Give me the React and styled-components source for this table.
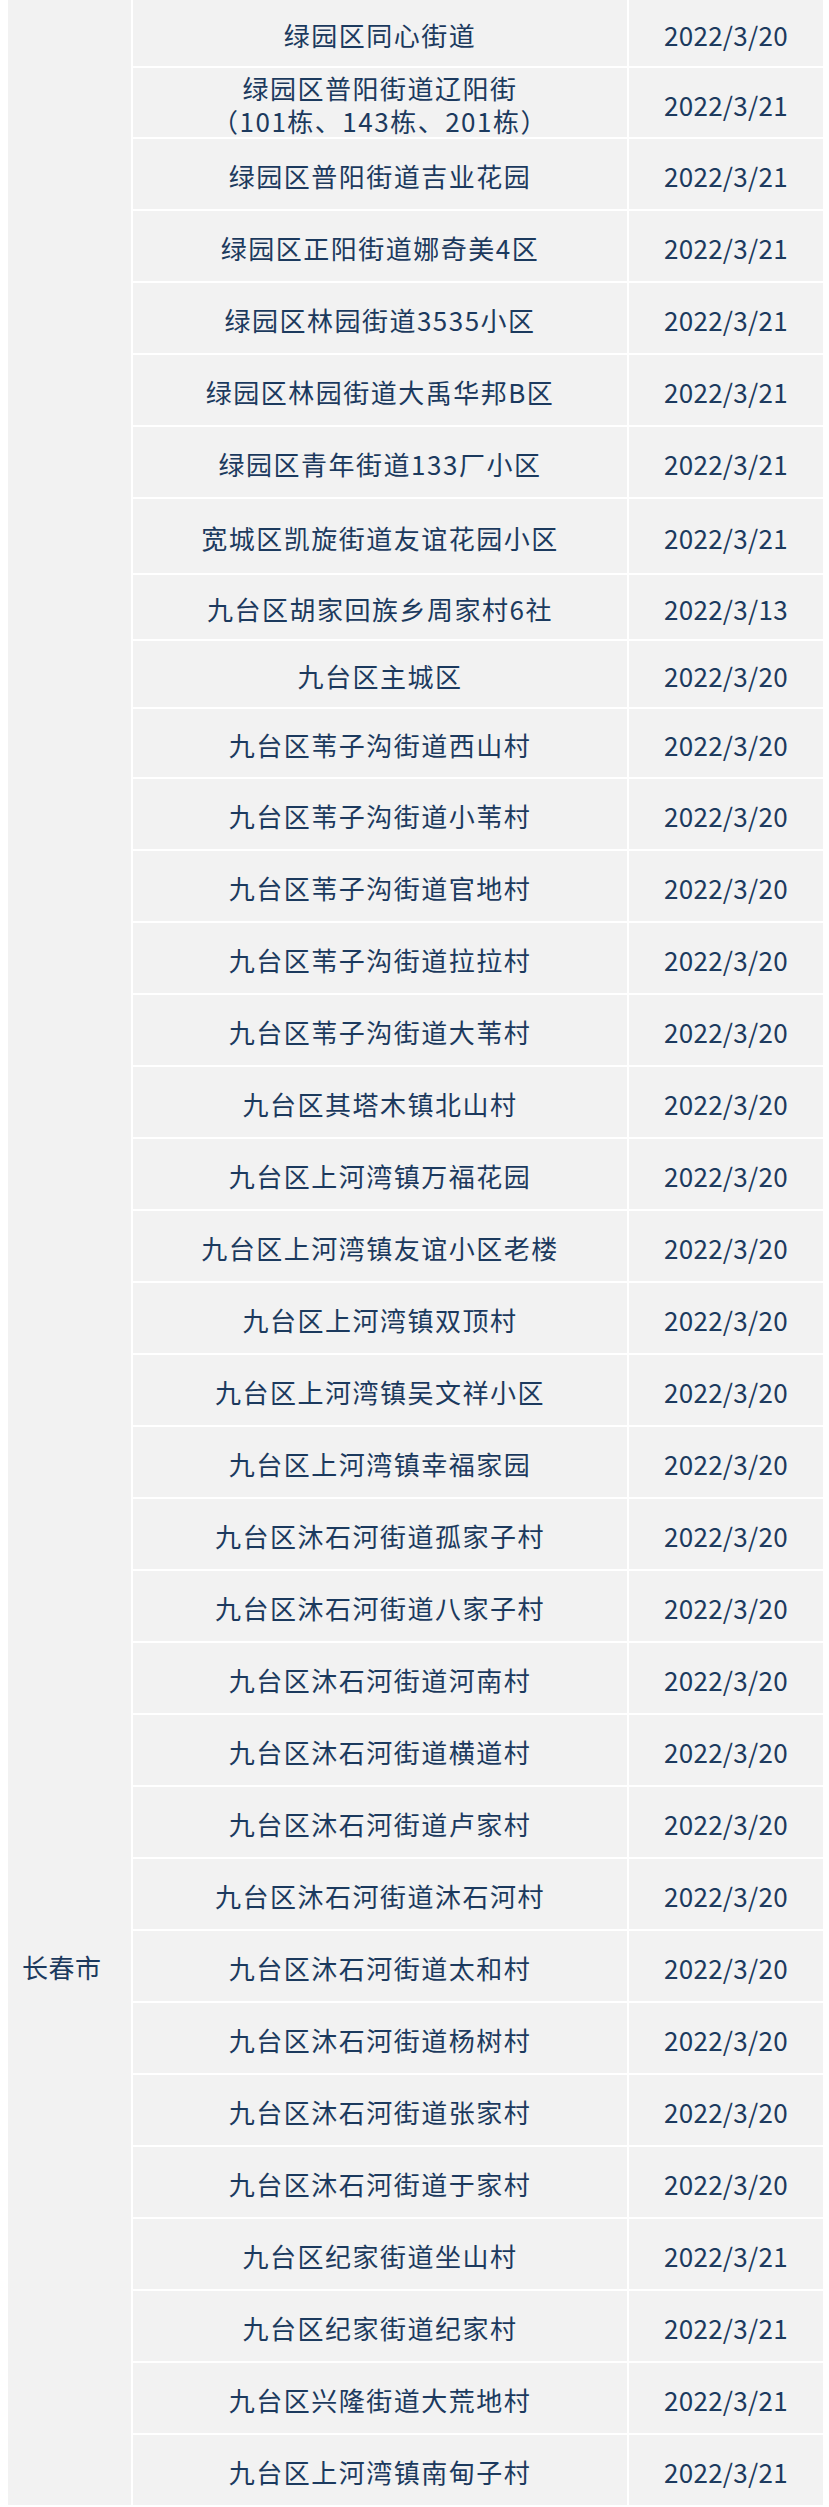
import styled, { createGlobalStyle } from "styled-components";

const GlobalStyle = createGlobalStyle`
  html, body {
    margin: 0;
    padding: 0;
    background: #ffffff;
  }
  body {
    font-family: "Noto Sans CJK SC", "Noto Sans", sans-serif;
    color: #1c3a5e;
  }
`;

const rows = [
  { place: "绿园区同心街道", date: "2022/3/20", h: 68 },
  { place: ["绿园区普阳街道辽阳街", "（101栋、143栋、201栋）"], date: "2022/3/21", h: 71 },
  { place: "绿园区普阳街道吉业花园", date: "2022/3/21" },
  { place: "绿园区正阳街道娜奇美4区", date: "2022/3/21" },
  { place: "绿园区林园街道3535小区", date: "2022/3/21" },
  { place: "绿园区林园街道大禹华邦B区", date: "2022/3/21" },
  { place: "绿园区青年街道133厂小区", date: "2022/3/21" },
  { place: "宽城区凯旋街道友谊花园小区", date: "2022/3/21", h: 76 },
  { place: "九台区胡家回族乡周家村6社", date: "2022/3/13", h: 66 },
  { place: "九台区主城区", date: "2022/3/20", h: 68 },
  { place: "九台区苇子沟街道西山村", date: "2022/3/20", h: 70 },
  { place: "九台区苇子沟街道小苇村", date: "2022/3/20" },
  { place: "九台区苇子沟街道官地村", date: "2022/3/20" },
  { place: "九台区苇子沟街道拉拉村", date: "2022/3/20" },
  { place: "九台区苇子沟街道大苇村", date: "2022/3/20" },
  { place: "九台区其塔木镇北山村", date: "2022/3/20" },
  { place: "九台区上河湾镇万福花园", date: "2022/3/20" },
  { place: "九台区上河湾镇友谊小区老楼", date: "2022/3/20" },
  { place: "九台区上河湾镇双顶村", date: "2022/3/20" },
  { place: "九台区上河湾镇吴文祥小区", date: "2022/3/20" },
  { place: "九台区上河湾镇幸福家园", date: "2022/3/20" },
  { place: "九台区沐石河街道孤家子村", date: "2022/3/20" },
  { place: "九台区沐石河街道八家子村", date: "2022/3/20" },
  { place: "九台区沐石河街道河南村", date: "2022/3/20" },
  { place: "九台区沐石河街道横道村", date: "2022/3/20" },
  { place: "九台区沐石河街道卢家村", date: "2022/3/20" },
  { place: "九台区沐石河街道沐石河村", date: "2022/3/20" },
  { place: "九台区沐石河街道太和村", date: "2022/3/20" },
  { place: "九台区沐石河街道杨树村", date: "2022/3/20" },
  { place: "九台区沐石河街道张家村", date: "2022/3/20" },
  { place: "九台区沐石河街道于家村", date: "2022/3/20" },
  { place: "九台区纪家街道坐山村", date: "2022/3/21" },
  { place: "九台区纪家街道纪家村", date: "2022/3/21" },
  { place: "九台区兴隆街道大荒地村", date: "2022/3/21" },
  { place: "九台区上河湾镇南甸子村", date: "2022/3/21" },
];

function App() {
  return (
    <>
      <GlobalStyle />
      <Page>
        <Table>
          <CityCell>长春市</CityCell>
          <Rows>
            {rows.map((r, i) => (
              <Row key={i} $h={(r.h || 72) - 2}>
                <PlaceCell>
                  {Array.isArray(r.place)
                    ? r.place.map((line) => <Line key={line}>{line}</Line>)
                    : r.place}
                </PlaceCell>
                <DateCell>{r.date}</DateCell>
              </Row>
            ))}
          </Rows>
        </Table>
      </Page>
    </>
  );
}

const Page = styled.div`
  width: 829px;
  padding: 0 6px 1px 8px;
  box-sizing: border-box;
  background: #ffffff;
`;

const Table = styled.div`
  display: flex;
  gap: 2px;
`;

const CityCell = styled.div`
  width: 123px;
  flex-shrink: 0;
  background: #f2f2f2;
  box-sizing: border-box;
  padding: 1952px 0 0 14px;
  font-size: 26px;
  line-height: 30px;
  letter-spacing: 0.5px;
`;

const Rows = styled.div`
  display: flex;
  flex-direction: column;
  gap: 2px;
  flex: 1;
`;

const Row = styled.div`
  display: grid;
  grid-template-columns: 494px 1fr;
  gap: 2px;
  height: ${(p) => p.$h}px;
`;

const PlaceCell = styled.div`
  background: #f2f2f2;
  display: flex;
  flex-direction: column;
  align-items: center;
  justify-content: center;
  padding-top: 3px;
  box-sizing: border-box;
  font-size: 26px;
  line-height: 33px;
  letter-spacing: 1.5px;
  white-space: nowrap;
`;

const Line = styled.div``;

const DateCell = styled.div`
  background: #f2f2f2;
  display: flex;
  align-items: center;
  justify-content: center;
  padding-top: 3px;
  box-sizing: border-box;
  font-size: 26px;
  letter-spacing: 0.3px;
`;

export default App;
